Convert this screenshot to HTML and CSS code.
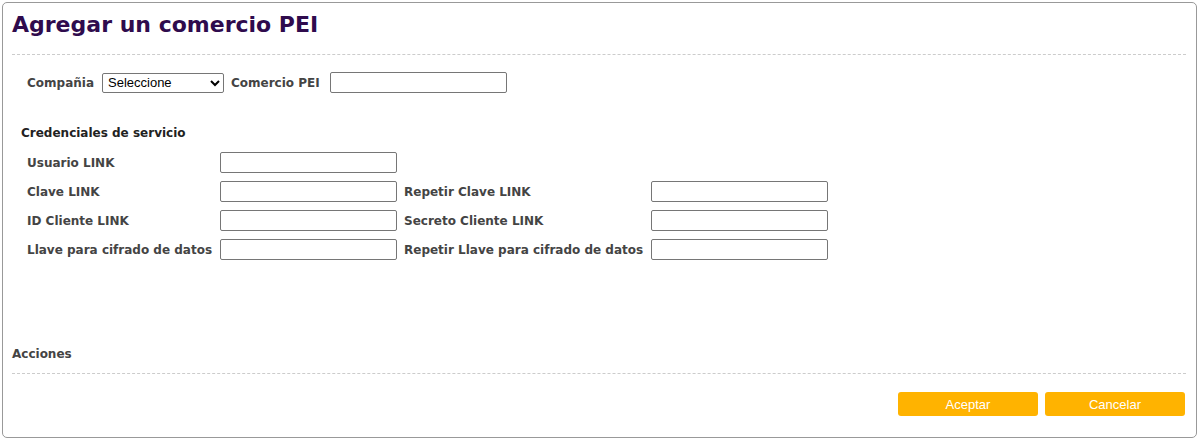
FILE: index.html
```html
<!DOCTYPE html>
<html lang="es">
<head>
<meta charset="utf-8">
<title>Agregar un comercio PEI</title>
<link rel="stylesheet" href="styles.css">
</head>
<body>
<div class="panel">
  <h1 class="title">Agregar un comercio PEI</h1>
  <div class="sep"></div>
  <div class="top-row">
    <label class="lbl">Compañia</label>
    <select class="sel"><option>Seleccione</option></select>
    <label class="lbl">Comercio PEI</label>
    <input class="inp inp-pei" type="text">
  </div>
  <h2 class="sub">Credenciales de servicio</h2>
  <div class="cred">
    <label class="lbl">Usuario LINK</label>
    <input class="inp" type="text">
    <span></span><span></span>
    <label class="lbl">Clave LINK</label>
    <input class="inp" type="text">
    <label class="lbl">Repetir Clave LINK</label>
    <input class="inp" type="text">
    <label class="lbl">ID Cliente LINK</label>
    <input class="inp" type="text">
    <label class="lbl">Secreto Cliente LINK</label>
    <input class="inp" type="text">
    <label class="lbl">Llave para cifrado de datos</label>
    <input class="inp" type="text">
    <label class="lbl">Repetir Llave para cifrado de datos</label>
    <input class="inp" type="text">
  </div>
  <div class="actions-title">Acciones</div>
  <div class="sep"></div>
  <div class="buttons">
    <button class="btn">Aceptar</button>
    <button class="btn">Cancelar</button>
  </div>
</div>
</body>
</html>
```

FILE: styles.css
```css
html, body {
  margin: 0;
  padding: 0;
  background: #fff;
}
body {
  font-family: "DejaVu Sans", Verdana, sans-serif;
}
.panel {
  margin: 2px;
  width: 1195px;
  height: 436px;
  box-sizing: border-box;
  border: 1px solid #999;
  border-radius: 5px;
  padding: 0 10px 0 9px;
  display: flex;
  flex-direction: column;
}
.title {
  margin: 8px 0 0 0;
  font-size: 22px;
  line-height: 28px;
  font-weight: bold;
  color: #2f0b4d;
}
.sep {
  border-top: 1px dashed #ccc;
  height: 0;
}
.panel > .sep:first-of-type {
  margin-top: 15px;
}
.top-row {
  display: flex;
  align-items: center;
  gap: 7px;
  margin: 17px 0 0 15px;
}
.top-row .sel {
  margin-left: 1px;
}
.top-row .inp-pei {
  margin-left: 3px;
}
.lbl {
  font-size: 12px;
  font-weight: bold;
  color: #444;
  white-space: nowrap;
}
.sel {
  width: 122px;
  height: 20px;
  font-family: "Liberation Sans", Arial, sans-serif;
  font-size: 13px;
  border: 1px solid #767676;
  border-radius: 2px;
  background: #fff;
  color: #000;
  padding: 0 0 0 1px;
}
.inp {
  width: 177px;
  height: 21px;
  box-sizing: border-box;
  border: 1px solid #767676;
  border-radius: 2px;
  margin: 0;
  padding: 1px 2px;
  font-size: 13px;
}
.sub {
  margin: 32px 0 0 9px;
  font-size: 12px;
  font-weight: bold;
  color: #222;
  line-height: 16px;
}
.cred {
  display: grid;
  grid-template-columns: 193px 184px 247px 177px;
  grid-auto-rows: 21px;
  row-gap: 8px;
  align-items: center;
  margin: 11px 0 0 15px;
}
.actions-title {
  margin-top: auto;
  font-size: 12px;
  font-weight: bold;
  color: #444;
  line-height: 16px;
  margin-bottom: 11px;
}
.buttons {
  display: flex;
  justify-content: flex-end;
  gap: 7px;
  margin: 18px 1px 21px 0;
}
.btn {
  width: 140px;
  height: 24px;
  border: none;
  border-radius: 3px;
  background: #ffb300;
  color: #fff;
  font-family: "Liberation Sans", Arial, sans-serif;
  font-size: 13px;
  padding: 0;
}
```
